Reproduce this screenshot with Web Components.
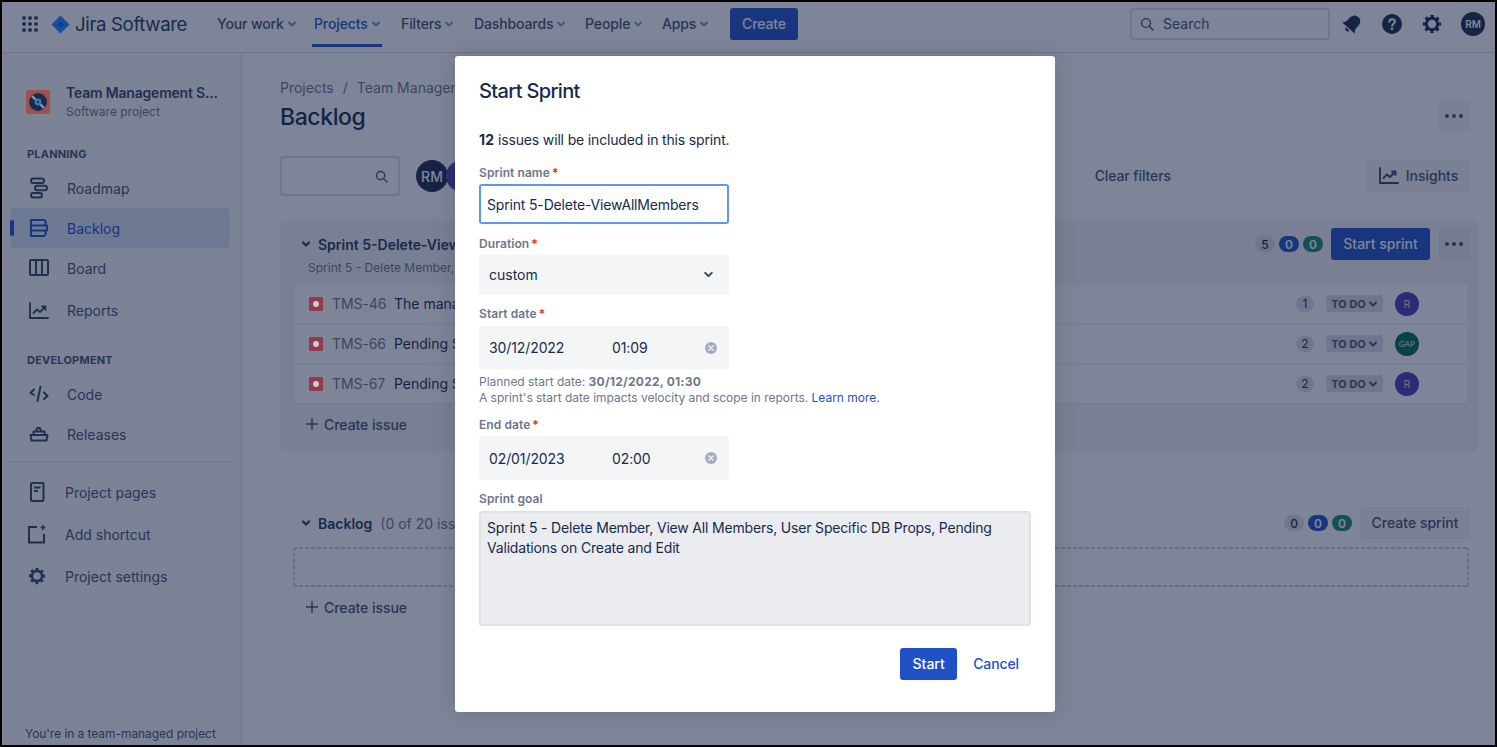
<!DOCTYPE html>
<html lang="en">
<head>
<meta charset="utf-8">
<title>Backlog - Start Sprint</title>
<style>
  html, body { margin: 0; height: 100%; overflow: hidden; }
  body { font-family: Inter, "Liberation Sans", sans-serif; font-size: 14px; color: #172b4d; }
  jira-app { height: 747px; }
</style>
</head>
<body>
<jira-app></jira-app>
<script>
const BLUE = '#1f51c6';
const chevron = (size = 10, color = 'currentColor', width = 2) => `<svg width="${size}" height="${size}" viewBox="0 0 10 10" fill="none"><path d="M2 3.5 5 6.5 8 3.5" stroke="${color}" stroke-width="${width}" stroke-linecap="round" stroke-linejoin="round"/></svg>`;
const dots = `<svg width="18" height="4" viewBox="0 0 18 4" fill="#42526e"><circle cx="2" cy="2" r="2"/><circle cx="9" cy="2" r="2"/><circle cx="16" cy="2" r="2"/></svg>`;
const plus = `<svg width="12" height="12" viewBox="0 0 12 12"><path d="M6 0v12M0 6h12" stroke="#42526e" stroke-width="1.5"/></svg>`;
const searchIcon = (s) => `<svg width="${s}" height="${s}" viewBox="0 0 14 14" fill="none" stroke="#42526e" stroke-width="1.4"><circle cx="6" cy="6" r="4.4"/><path d="M9.3 9.3 13 13" stroke-linecap="round"/></svg>`;
const gear = (s, c) => `<svg width="${s}" height="${s}" viewBox="0 0 20 20" fill="none" stroke="${c}"><circle cx="10" cy="10" r="5.7" stroke-width="3"/><circle cx="10" cy="10" r="7.8" stroke-width="2.6" stroke-dasharray="3.1 3" stroke-dashoffset="1.5"/></svg>`;
const chart = `<path d="M2 2v15h18" stroke-linecap="round" stroke-linejoin="round"/><path d="M5.5 12 9 8.5l3 2.5 5-5M14 5.5h3.5V9" stroke-linecap="round" stroke-linejoin="round"/>`;

const sideIcons = {
  roadmap: `<svg width="20" height="22" viewBox="0 0 20 22" fill="none" stroke="#344563" stroke-width="2"><rect x="2" y="1.5" width="13" height="4.6" rx="2.3"/><rect x="6" y="8.7" width="12" height="4.6" rx="2.3"/><rect x="2" y="15.9" width="11" height="4.6" rx="2.3"/></svg>`,
  backlog: `<svg width="20" height="20" viewBox="0 0 20 20" fill="none" stroke="${BLUE}" stroke-width="2"><path d="M2 2h13a3 3 0 0 1 0 5.5H2zM2 7.5h16v5H2zM2 12.5h13a3 3 0 0 1 0 5.5H2z" stroke-linejoin="round"/></svg>`,
  board: `<svg width="20" height="18" viewBox="0 0 20 18" fill="none" stroke="#344563" stroke-width="2"><rect x="1" y="1" width="18" height="15" rx="1"/><path d="M7 1v15M13 1v15"/></svg>`,
  reports: `<svg width="22" height="19" viewBox="0 0 22 19" fill="none" stroke="#344563" stroke-width="1.8">${chart}</svg>`,
  code: `<svg width="20" height="18" viewBox="0 0 20 18" fill="none" stroke="#344563" stroke-width="2" stroke-linecap="round" stroke-linejoin="round"><path d="M5 4.5 1.5 8 5 10M15 7.5 18.5 11 15 14M11.5 1.5 8.5 16"/></svg>`,
  releases: `<svg width="20" height="16" viewBox="0 0 20 16" fill="none" stroke="#344563" stroke-width="2" stroke-linejoin="round"><path d="M1.5 9h17l-1 5.5h-15zM4.5 9V5.5h11V9M7 5.5 8 2h3l1 3.5"/></svg>`,
  pages: `<svg width="16" height="20" viewBox="0 0 16 20" fill="none" stroke="#344563" stroke-width="2"><rect x="2" y="1" width="12.5" height="18" rx="1"/><path d="M5 5.5h6.5M5 9h4"/></svg>`,
  shortcut: `<svg width="20" height="19" viewBox="0 0 20 19" fill="none" stroke="#344563" stroke-width="2"><path d="M10 2H2v15.5h15V9"/><path d="M16 0v5M13.5 2.5h5" stroke-width="1.6"/></svg>`,
  settings: gear(18, '#344563')
};

class JiraApp extends HTMLElement {
  constructor() {
    super();
    this.attachShadow({ mode: 'open' });
    this.shadowRoot.innerHTML = `
      <style>
        :host { display: block; position: relative; box-sizing: border-box; border: 2px solid #000; overflow: hidden; background: #fff; }
        .frame { display: flex; flex-direction: column; height: 100%; }
        .body { flex: 1; display: flex; min-height: 0; }
      </style>
      <div class="frame">
        <jira-topbar></jira-topbar>
        <div class="body">
          <jira-sidebar></jira-sidebar>
          <backlog-view></backlog-view>
        </div>
      </div>
      <modal-blanket></modal-blanket>
      <start-sprint-modal></start-sprint-modal>
    `;
  }
}

class JiraTopbar extends HTMLElement {
  constructor() {
    super();
    this.attachShadow({ mode: 'open' });
    const grid = [2, 8, 14].map(y => [2, 8, 14].map(x => `<rect x="${x - 1.8}" y="${y - 1.8}" width="3.6" height="3.6" rx="1"/>`).join('')).join('');
    this.shadowRoot.innerHTML = `
      <style>
        :host { display: flex; align-items: center; box-sizing: border-box; height: 51px; flex: none; background: #fff; border-bottom: 1px solid #dfe1e6; padding: 0 10px 6px 20px; color: #42526e; font-weight: 500; }
        .logo { display: flex; align-items: center; margin-left: 13px; width: 147px; }
        .logo span { font-size: 18.6px; font-weight: 400; color: #253858; margin-left: 5px; letter-spacing: -.35px; white-space: nowrap; }
        nav { display: flex; align-self: stretch; margin: 0 0 -6px 11px; padding-bottom: 6px; }
        .create { margin-left: 8px; height: 32px; width: 68px; box-sizing: border-box; padding-bottom: 1px; display: flex; align-items: center; justify-content: center; background: ${BLUE}; color: #fff; border-radius: 3px; letter-spacing: -.1px; }
        .search { margin-left: auto; width: 200px; height: 32px; box-sizing: border-box; border: 2px solid #dfe1e6; border-radius: 4px; display: flex; align-items: center; gap: 9px; padding: 0 0 1px 8px; font-weight: 400; color: #42526e; }
        .tools { display: flex; align-items: center; gap: 16px; margin-left: 10px; }
        .tool { width: 24px; display: flex; justify-content: center; }
        .avatar { width: 24px; height: 24px; border-radius: 50%; background: #172b4d; color: #fff; font-size: 10px; font-weight: 600; display: flex; align-items: center; justify-content: center; margin-left: 1px; }
      </style>
      <svg width="16" height="16" viewBox="0 0 16 16" fill="#344563">${grid}</svg>
      <div class="logo">
        <svg width="19" height="19" viewBox="0 0 19 19"><path d="M9.5 .5 18.5 9.5 9.5 18.5 .5 9.5z" fill="#2684ff"/><path d="M9.5 6.5 12.5 9.5 9.5 12.5 6.5 9.5z" fill="#0065ff"/></svg>
        <span>Jira Software</span>
      </div>
      <nav>
        <nav-link style="width:97px">Your work</nav-link>
        <nav-link style="width:87px" active>Projects</nav-link>
        <nav-link style="width:73px">Filters</nav-link>
        <nav-link style="width:111px">Dashboards</nav-link>
        <nav-link style="width:77px">People</nav-link>
        <nav-link style="width:68px">Apps</nav-link>
      </nav>
      <div class="create">Create</div>
      <div class="search">${searchIcon(14)}<span>Search</span></div>
      <div class="tools">
        <div class="tool"><svg width="22" height="22" viewBox="0 0 20 20" fill="#172b4d"><g transform="rotate(42 10 10)"><path d="M10 1.5C6.5 1.5 4.6 4 4.6 7.5v4L2.5 14.8h15l-2.1-3.3v-4C15.4 4 13.5 1.5 10 1.5z"/><path d="M7.8 16a2.2 2.2 0 0 0 4.4 0z"/></g></svg></div>
        <div class="tool"><svg width="20" height="20" viewBox="0 0 20 20"><circle cx="10" cy="10" r="10" fill="#172b4d"/><path d="M7.2 7.8c.1-1.6 1.3-2.6 2.9-2.6 1.6 0 2.8 1 2.8 2.4 0 1.2-.7 1.8-1.6 2.4-.8.5-1.2.9-1.2 1.7" fill="none" stroke="#fff" stroke-width="2" stroke-linecap="round"/><circle cx="10" cy="14.8" r="1.3" fill="#fff"/></svg></div>
        <div class="tool">${gear(20, '#172b4d')}</div>
        <div class="avatar">RM</div>
      </div>
    `;
  }
}

class NavLink extends HTMLElement {
  constructor() {
    super();
    this.attachShadow({ mode: 'open' });
    this.shadowRoot.innerHTML = `
      <style>
        :host { display: flex; align-items: center; gap: 3px; position: relative; box-sizing: border-box; padding: 0 0 1px 8px; white-space: nowrap; letter-spacing: -.12px; }
        :host([active]) { color: ${BLUE}; }
        :host([active])::after { content: ""; position: absolute; left: 6px; right: 11px; bottom: -1px; height: 3px; background: ${BLUE}; }
        svg { opacity: .6; }
      </style>
      <slot></slot>${chevron(10)}
    `;
  }
}

class SideItem extends HTMLElement {
  constructor() {
    super();
    this.attachShadow({ mode: 'open' });
    this.shadowRoot.innerHTML = `
      <style>
        :host { display: flex; align-items: center; height: 40px; position: relative; margin: 0 11px 0 8px; border-radius: 4px; color: #42526e; }
        :host([active]) { background: #dbe6f7; color: ${BLUE}; }
        :host([active])::before { content: ""; position: absolute; left: 0; top: 12px; width: 4px; height: 16px; border-radius: 2px; background: ${BLUE}; }
        .icon { width: 24px; display: flex; justify-content: center; margin-left: 17px; }
        .label { margin-left: 16px; }
        :host([tight]) .icon { margin-left: 15px; }
      </style>
      <div class="icon">${sideIcons[this.getAttribute('icon')]}</div>
      <div class="label"><slot></slot></div>
    `;
  }
}

class JiraSidebar extends HTMLElement {
  constructor() {
    super();
    this.attachShadow({ mode: 'open' });
    this.shadowRoot.innerHTML = `
      <style>
        :host { display: block; position: relative; width: 240px; flex: none; box-sizing: border-box; border-right: 1px solid #dfe1e6; background: #fafbfc; }
        .project { display: flex; align-items: center; padding: 30px 0 0 24px; }
        .tile { position: relative; z-index: 2; width: 24px; height: 24px; border-radius: 2px; background: #a3504f; display: flex; align-items: center; justify-content: center; }
        .text { margin-left: 16px; }
        .name { font-weight: 600; color: #344563; white-space: nowrap; line-height: 20px; letter-spacing: -.2px; }
        .kind { font-size: 12px; color: #6b778c; line-height: 18px; }
        h4 { margin: 0; padding-left: 25px; font-size: 11px; font-weight: 700; color: #42526e; letter-spacing: .2px; line-height: 14px; }
        h4.planning { margin-top: 26px; margin-bottom: 7px; }
        h4.dev { margin-top: 23px; margin-bottom: 7px; }
        .reports { margin-top: 2px; }
        hr { border: 0; border-top: 2px solid #ebecf0; margin: 7px 8px 9px 6px; }
        .extra { margin-bottom: 2px; }
        .footer { position: absolute; left: 23px; bottom: 3px; font-size: 12px; color: #42526e; white-space: nowrap; line-height: 16px; letter-spacing: -.06px; }
      </style>
      <div class="project">
        <div class="tile"><svg width="20" height="20" viewBox="0 0 20 20"><circle cx="10" cy="10" r="9" fill="#1a2b52"/><path d="M4 4l12 12" stroke="#8d96aa" stroke-width="2.4"/><circle cx="10" cy="10" r="3.4" fill="#3a7db0"/><circle cx="10" cy="10" r="1.2" fill="#1a2b52"/></svg></div>
        <div class="text"><div class="name">Team Management S...</div><div class="kind">Software project</div></div>
      </div>
      <h4 class="planning">PLANNING</h4>
      <side-item icon="roadmap">Roadmap</side-item>
      <side-item icon="backlog" active>Backlog</side-item>
      <side-item icon="board">Board</side-item>
      <side-item icon="reports" class="reports">Reports</side-item>
      <h4 class="dev">DEVELOPMENT</h4>
      <side-item icon="code">Code</side-item>
      <side-item icon="releases">Releases</side-item>
      <hr>
      <side-item icon="pages" tight class="extra">Project pages</side-item>
      <side-item icon="shortcut" tight class="extra">Add shortcut</side-item>
      <side-item icon="settings" tight>Project settings</side-item>
      <div class="footer">You're in a team-managed project</div>
    `;
  }
}

class CountBadge extends HTMLElement {
  constructor() {
    super();
    this.attachShadow({ mode: 'open' });
    this.shadowRoot.innerHTML = `
      <style>
        :host { display: flex; align-items: center; justify-content: center; width: 20px; height: 16px; border-radius: 8px; background: #dfe1e6; color: #172b4d; font-size: 12px; font-weight: 500; }
        :host([kind="blue"]) { background: ${BLUE}; color: #fff; font-weight: 600; }
        :host([kind="green"]) { background: #1f8a6a; color: #fff; font-weight: 600; }
      </style>
      <slot></slot>
    `;
  }
}

class IssueRow extends HTMLElement {
  constructor() {
    super();
    this.attachShadow({ mode: 'open' });
    const gap = this.getAttribute('initials') === 'GAP';
    this.shadowRoot.innerHTML = `
      <style>
        :host { display: flex; align-items: center; height: 40px; box-sizing: border-box; background: #fff; border: 1px solid #ebecf0; border-top: 0; padding-left: 15px; }
        :host(:first-child) { height: 41px; border-top: 1px solid #ebecf0; }
        .type { position: relative; z-index: 2; width: 14px; height: 14px; border-radius: 2px; background: #95394f; display: flex; align-items: center; justify-content: center; flex: none; }
        .type::after { content: ""; width: 6px; height: 6px; border-radius: 50%; background: #c9cdd6; }
        .key { margin-left: 9px; color: #6b778c; width: 62px; flex: none; white-space: nowrap; letter-spacing: -.1px; }
        .summary { color: #172b4d; white-space: nowrap; }
        .right { margin-left: auto; display: flex; align-items: center; }
        .points { width: 18px; height: 16px; border-radius: 8px; background: #dfe1e6; font-size: 12px; color: #172b4d; display: flex; align-items: center; justify-content: center; }
        .status { margin-left: 12px; width: 57px; height: 17px; border-radius: 3px; background: #dfe1e6; color: #42526e; font-size: 11px; font-weight: 700; display: flex; align-items: center; justify-content: center; gap: 2px; white-space: nowrap; }
        .avatar { margin: 0 49px 0 12px; width: 24px; height: 24px; border-radius: 50%; background: ${gap ? '#006b50' : '#4a3cb0'}; color: #dfe1e6; font-size: ${gap ? 8 : 10}px; display: flex; align-items: center; justify-content: center; }
      </style>
      <div class="type"></div>
      <div class="key">${this.getAttribute('key')}</div>
      <div class="summary"><slot></slot></div>
      <div class="right">
        <div class="points">${this.getAttribute('points')}</div>
        <div class="status">TO DO ${chevron(10, '#42526e')}</div>
        <div class="avatar">${this.getAttribute('initials')}</div>
      </div>
    `;
  }
}

class BacklogView extends HTMLElement {
  constructor() {
    super();
    this.attachShadow({ mode: 'open' });
    const dash = '#c8cdd6';
    this.shadowRoot.innerHTML = `
      <style>
        :host { display: block; flex: 1; min-width: 0; padding: 25px 17px 0 38px; background: #fff; }
        .crumbs { color: #6b778c; line-height: 20px; white-space: nowrap; display: flex; gap: 9px; }
        .title-row { display: flex; justify-content: space-between; align-items: center; height: 32px; margin: 2px 0 0; }
        h1 { margin: 2px 0 0; font-size: 23px; font-weight: 500; line-height: 32px; letter-spacing: -.4px; }
        .btn { height: 32px; box-sizing: border-box; padding-bottom: 1px; border-radius: 3px; background: rgba(9, 30, 66, .04); color: #42526e; display: flex; align-items: center; justify-content: center; font-weight: 500; white-space: nowrap; }
        .more { width: 32px; }
        .more.title { margin-right: 8px; }
        .filters { display: flex; align-items: center; height: 40px; margin-top: 24px; }
        .find { width: 120px; height: 40px; box-sizing: border-box; border: 2px solid #dfe1e6; border-radius: 3px; display: flex; align-items: center; justify-content: flex-end; padding-right: 10px; }
        .avatars { display: flex; margin-left: 16px; }
        .av { width: 32px; height: 32px; border-radius: 50%; background: #172b4d; color: #fff; font-weight: 500; display: flex; align-items: center; justify-content: center; position: relative; }
        .av.two { background: #5243aa; margin-left: -2px; }
        .clear { margin-left: auto; padding-bottom: 1px; color: #42526e; font-weight: 500; letter-spacing: -.1px; }
        .insights { width: 104px; gap: 6px; margin: 0 8px 0 195px; }
        .sprint { margin-top: 24px; height: 232px; background: #f4f5f7; border-radius: 6px; padding: 8px 8px 0 13px; box-sizing: border-box; }
        .head { display: flex; align-items: center; height: 32px; }
        .head .chev { margin: 0 7px 0 8px; display: flex; }
        .head b { font-weight: 600; color: #253858; white-space: nowrap; }
        .muted { color: #6b778c; margin-left: 8px; white-space: nowrap; }
        .counts { margin-left: auto; display: flex; gap: 4px; align-items: center; }
        .start { margin-left: 8px; width: 99px; background: ${BLUE}; color: #fff; }
        .head .more { margin-left: 8px; }
        .goal { font-size: 12px; color: #6b778c; margin: 0 0 7px 15px; line-height: 16px; white-space: nowrap; }
        .rows { display: flex; flex-direction: column; margin-right: 1px; }
        .add { display: flex; align-items: center; gap: 6px; height: 40px; color: #42526e; font-weight: 500; padding-left: 13px; letter-spacing: -.05px; }
        .backlog { margin-top: 55px; padding: 0 8px 0 13px; }
        .backlog .create { margin-left: 8px; width: 110px; }
        .drop { margin: 8px 1px 0 0; height: 40px; border-radius: 3px;
          background:
            repeating-linear-gradient(90deg, ${dash} 0 4px, transparent 4px 6px) top / 100% 2px no-repeat,
            repeating-linear-gradient(90deg, ${dash} 0 4px, transparent 4px 6px) bottom / 100% 2px no-repeat,
            repeating-linear-gradient(180deg, ${dash} 0 4px, transparent 4px 6px) left / 2px 100% no-repeat,
            repeating-linear-gradient(180deg, ${dash} 0 4px, transparent 4px 6px) right / 2px 100% no-repeat; }
      </style>
      <div class="crumbs"><span>Projects</span><span>/</span><span>Team Managem</span></div>
      <div class="title-row"><h1>Backlog</h1><div class="btn more title">${dots}</div></div>
      <div class="filters">
        <div class="find">${searchIcon(13)}</div>
        <div class="avatars"><div class="av">RM</div><div class="av two"></div></div>
        <div class="clear">Clear filters</div>
        <div class="btn insights"><svg width="22" height="19" viewBox="0 0 22 19" fill="none" stroke="#344563" stroke-width="1.8">${chart}</svg>Insights</div>
      </div>
      <div class="sprint">
        <div class="head">
          <span class="chev">${chevron(10, '#253858', 2.2)}</span><b>Sprint 5-Delete-View</b>
          <div class="counts"><count-badge>5</count-badge><count-badge kind="blue">0</count-badge><count-badge kind="green">0</count-badge></div>
          <div class="btn start">Start sprint</div>
          <div class="btn more">${dots}</div>
        </div>
        <div class="goal">Sprint 5 - Delete Member, V</div>
        <div class="rows">
          <issue-row key="TMS-46" points="1" initials="R">The mana</issue-row>
          <issue-row key="TMS-66" points="2" initials="GAP">Pending S</issue-row>
          <issue-row key="TMS-67" points="2" initials="R">Pending S</issue-row>
        </div>
        <div class="add">${plus}Create issue</div>
      </div>
      <div class="backlog">
        <div class="head">
          <span class="chev">${chevron(10, '#253858', 2.2)}</span><b>Backlog</b><span class="muted">(0 of 20 issu</span>
          <div class="counts"><count-badge>0</count-badge><count-badge kind="blue">0</count-badge><count-badge kind="green">0</count-badge></div>
          <div class="btn create">Create sprint</div>
        </div>
        <div class="drop"></div>
        <div class="add">${plus}Create issue</div>
      </div>
    `;
  }
}

class ModalBlanket extends HTMLElement {
  constructor() {
    super();
    this.attachShadow({ mode: 'open' });
    this.shadowRoot.innerHTML = `<style>:host { display: block; position: absolute; inset: 0; z-index: 1; background: rgba(18, 29, 64, .54); }</style>`;
  }
}

class FormField extends HTMLElement {
  constructor() {
    super();
    this.attachShadow({ mode: 'open' });
    const req = this.hasAttribute('required') ? '<i>*</i>' : '';
    this.shadowRoot.innerHTML = `
      <style>
        :host { display: block; }
        label { display: block; font-size: 12px; font-weight: 600; color: #6b778c; line-height: 16px; margin-bottom: var(--label-gap, 3px); letter-spacing: .08px; }
        i { color: #de350b; font-style: normal; margin-left: 2px; }
      </style>
      <label>${this.getAttribute('label')}${req}</label>
      <slot></slot>
    `;
  }
}

class DateField extends HTMLElement {
  constructor() {
    super();
    this.attachShadow({ mode: 'open' });
    this.shadowRoot.innerHTML = `
      <style>
        :host { display: flex; align-items: center; width: 250px; box-sizing: border-box; background: #f4f5f7; border-radius: 3px; padding-left: 10px; color: #172b4d; letter-spacing: -.1px; }
        .date { width: 123px; }
        svg { margin-left: auto; margin-right: 12px; }
      </style>
      <span class="date">${this.getAttribute('date')}</span><span>${this.getAttribute('time')}</span>
      <svg width="12" height="12" viewBox="0 0 12 12"><circle cx="6" cy="6" r="6" fill="#a5adba"/><path d="M4 4l4 4M8 4l-4 4" stroke="#f4f5f7" stroke-width="1.5" stroke-linecap="round"/></svg>
    `;
  }
}

class StartSprintModal extends HTMLElement {
  constructor() {
    super();
    this.attachShadow({ mode: 'open' });
    this.shadowRoot.innerHTML = `
      <style>
        :host { display: block; position: absolute; z-index: 3; left: 453px; top: 54px; width: 600px; height: 656px; box-sizing: border-box; background: #fff; border-radius: 3px; box-shadow: 0 0 24px rgba(9, 30, 66, .18); padding: 23px 24px 0; color: #172b4d; }
        h2 { margin: 0; font-size: 20px; font-weight: 500; line-height: 24px; letter-spacing: -.65px; }
        .count { margin: 27px 0 0; line-height: 20px; letter-spacing: -.16px; }
        .count b { font-weight: 700; letter-spacing: .2px; }
        form-field.name { margin-top: 15px; }
        form-field.dur { margin-top: 12px; }
        form-field.sd { margin-top: 11px; --label-gap: 4px; }
        form-field.ed { margin-top: 11px; }
        form-field.gl { margin-top: 11px; --label-gap: 4px; }
        .input { width: 250px; height: 40px; box-sizing: border-box; border: 2px solid #5c97f5; border-radius: 3px; padding-left: 6px; display: flex; align-items: center; letter-spacing: -.17px; }
        .select { width: 250px; height: 40px; background: #f4f5f7; border-radius: 3px; display: flex; align-items: center; justify-content: space-between; padding: 0 15px 1px 10px; box-sizing: border-box; }
        date-field.s { height: 43px; }
        date-field.e { height: 44px; }
        .hint { font-size: 12px; color: #6b778c; line-height: 16px; margin-top: 5px; letter-spacing: -.02px; }
        .hint b { font-weight: 700; letter-spacing: .25px; }
        .hint a { color: ${BLUE}; }
        .goal { height: 115px; box-sizing: border-box; background: #ebecf0; border: 2px solid #dfe1e6; border-radius: 3px; padding: 5px 6px; line-height: 20px; letter-spacing: -.18px; }
        .actions { display: flex; justify-content: flex-end; align-items: center; margin-top: 22px; padding-right: 12px; }
        .start { width: 57px; height: 32px; box-sizing: border-box; padding-bottom: 1px; background: ${BLUE}; color: #fff; font-weight: 500; border-radius: 3px; display: flex; align-items: center; justify-content: center; }
        .cancel { margin-left: 16px; padding-bottom: 1px; color: ${BLUE}; font-weight: 500; letter-spacing: -.1px; }
      </style>
      <h2>Start Sprint</h2>
      <p class="count"><b>12</b> issues will be included in this sprint.</p>
      <form-field class="name" label="Sprint name" required><div class="input">Sprint 5-Delete-ViewAllMembers</div></form-field>
      <form-field class="dur" label="Duration" required><div class="select">custom ${chevron(11, '#344563', 1.8)}</div></form-field>
      <form-field class="sd" label="Start date" required>
        <date-field class="s" date="30/12/2022" time="01:09"></date-field>
        <div class="hint">Planned start date: <b>30/12/2022, 01:30</b><br>A sprint's start date impacts velocity and scope in reports. <a>Learn more.</a></div>
      </form-field>
      <form-field class="ed" label="End date" required><date-field class="e" date="02/01/2023" time="02:00"></date-field></form-field>
      <form-field class="gl" label="Sprint goal"><div class="goal">Sprint 5 - Delete Member, View All Members, User Specific DB Props, Pending Validations on Create and Edit</div></form-field>
      <div class="actions"><div class="start">Start</div><div class="cancel">Cancel</div></div>
    `;
  }
}

customElements.define('nav-link', NavLink);
customElements.define('side-item', SideItem);
customElements.define('count-badge', CountBadge);
customElements.define('issue-row', IssueRow);
customElements.define('form-field', FormField);
customElements.define('date-field', DateField);
customElements.define('modal-blanket', ModalBlanket);
customElements.define('jira-topbar', JiraTopbar);
customElements.define('jira-sidebar', JiraSidebar);
customElements.define('backlog-view', BacklogView);
customElements.define('start-sprint-modal', StartSprintModal);
customElements.define('jira-app', JiraApp);
</script>
</body>
</html>
